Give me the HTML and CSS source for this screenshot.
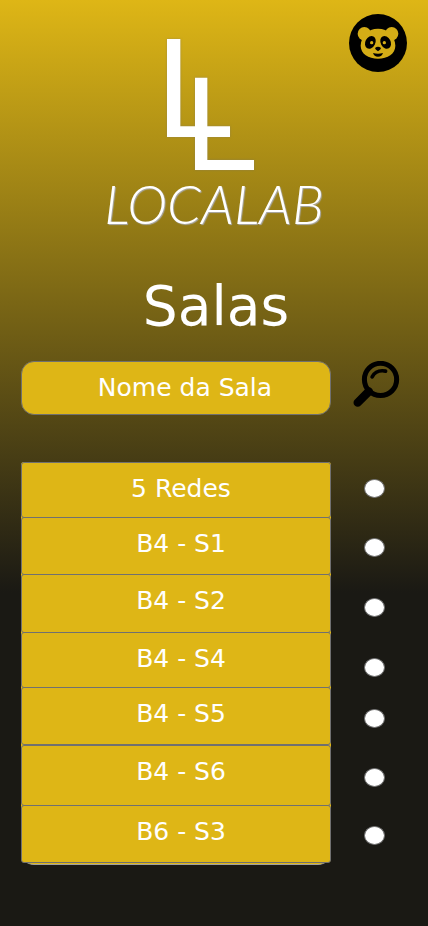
FILE: index.html
```html
<!DOCTYPE html>
<html lang="pt">
<head>
<meta charset="utf-8">
<meta name="viewport" content="width=device-width, initial-scale=1">
<title>Localab - Salas</title>
<link rel="stylesheet" href="styles.css">
</head>
<body>
<header class="top">
  <div class="brand">
    <svg class="brand-mark" viewBox="228 57 261 393" aria-hidden="true">
      <path d="M228 57h40v262h149v32H228z" fill="#fff"/>
      <path d="M312 173h37v247h140v30H312z" fill="#fff"/>
    </svg>
    <span class="brand-name">LOCALAB</span>
  </div>
  <button class="profile" type="button" aria-label="Perfil">
    <svg viewBox="27 27 174 174" aria-hidden="true">
      <circle cx="114" cy="114" r="87" fill="#000"/>
      <g fill="#d4ad16">
        <circle cx="73" cy="86" r="20"/>
        <circle cx="155" cy="86" r="20"/>
        <path d="M114 71c31 0 51 23 52 51 0 24-23 39-52 39s-52-15-52-39c1-28 21-51 52-51z"/>
      </g>
      <g fill="#000">
        <ellipse cx="91" cy="112" rx="15" ry="20" transform="rotate(28 91 112)"/>
        <ellipse cx="137" cy="112" rx="15" ry="20" transform="rotate(-28 137 112)"/>
        <path d="M105 129q9-8 18 0 0 4-9 10-9-6-9-10z"/>
        <path d="M99 144q15 5 30 0-3 11-15 11t-15-11z"/>
      </g>
      <circle cx="95" cy="113" r="5" fill="#d4ad16"/>
      <circle cx="133" cy="113" r="5" fill="#d4ad16"/>
    </svg>
  </button>
</header>
<main>
  <h1>Salas</h1>
  <form class="layout">
    <input class="search-field" type="text" placeholder="Nome da Sala" aria-label="Nome da Sala">
    <button class="search-button" type="button" aria-label="Pesquisar">
      <svg viewBox="100 32 140 140" fill="none" stroke="#000" stroke-linecap="round" aria-hidden="true">
        <circle cx="182" cy="87" r="48" stroke-width="15"/>
        <path d="M157 79q12-22 40-17" stroke-width="11"/>
        <path d="M114 156l33-33" stroke-width="25"/>
      </svg>
    </button>
    <div class="rooms">
      <label class="room" for="r1">5 Redes</label>
      <label class="room" for="r2">B4 - S1</label>
      <label class="room" for="r3">B4 - S2</label>
      <label class="room" for="r4">B4 - S4</label>
      <label class="room" for="r5">B4 - S5</label>
      <label class="room" for="r6">B4 - S6</label>
      <label class="room" for="r7">B6 - S3</label>
    </div>
    <div class="choices">
      <input type="radio" name="room" id="r1">
      <input type="radio" name="room" id="r2">
      <input type="radio" name="room" id="r3">
      <input type="radio" name="room" id="r4">
      <input type="radio" name="room" id="r5">
      <input type="radio" name="room" id="r6">
      <input type="radio" name="room" id="r7">
    </div>
  </form>
</main>
</body>
</html>
```
FILE: styles.css
```css
* {
  box-sizing: border-box;
}

body {
  margin: 0;
  min-height: 100vh;
  background: linear-gradient(#deb616, #1a1914 64%) no-repeat #1a1914;
  color: #fff;
  font-family: "DejaVu Sans", sans-serif;
  font-size: 25px;
}

button {
  padding: 0;
  border: 0;
  background: none;
  cursor: pointer;
}

svg {
  display: block;
}

.top {
  display: grid;
  grid-template-columns: 1fr auto 1fr;
  padding: 14px 21px 0;
}

.brand {
  grid-column: 2;
  display: flex;
  flex-direction: column;
  align-items: center;
  padding-top: 25px;
}

.brand-mark {
  width: 87px;
  height: 131px;
  margin-right: 8px;
  filter: drop-shadow(0 0 1px #77777780);
}

.brand-name {
  font-family: Lato, sans-serif;
  font-size: 54px;
  font-style: italic;
  font-weight: 300;
  line-height: 68px;
  text-shadow: 1px 1px 1px #aaa;
}

.profile {
  grid-column: 3;
  justify-self: end;
  align-self: start;
  width: 58px;
  height: 58px;
}

h1 {
  margin: 35px 0 22px;
  padding-left: 4px;
  font-size: 55px;
  font-weight: 400;
  line-height: 66px;
  text-align: center;
}

.layout {
  display: grid;
  grid-template-columns: 1fr 47px;
  column-gap: 22px;
  row-gap: 47px;
  padding: 0 28px 60px 21px;
}

.search-field {
  width: 100%;
  height: 54px;
  padding: 0 0 2px 18px;
  border: 1px solid #707070;
  border-radius: 13px;
  background: #deb616;
  color: #fff;
  font: inherit;
  text-align: center;
}

.search-field::placeholder {
  color: #fff;
  opacity: 1;
}

.search-button {
  width: 47px;
  height: 47px;
}

.rooms {
  display: grid;
  grid-template-rows: 55px 57px 58px 55px 58px 60px 58px;
  padding-bottom: 1px;
  border-bottom: 1px solid #a0a0a0;
  border-radius: 3px 3px 13px 13px;
  background: #deb616;
}

.room {
  margin-bottom: -1px;
  padding: 11px 0 0 10px;
  border: 1px solid #707070;
  border-radius: 3px;
  background: #deb616;
  line-height: 30px;
  text-align: center;
}

.room:nth-child(5),
.room:last-child {
  margin-bottom: 0;
}

.choices {
  display: grid;
  grid-template-rows: 59px 60px 60px 51px 59px 58px 18px;
  justify-items: center;
  align-content: start;
  padding: 17px 4px 0 0;
}

.choices input {
  width: 21px;
  height: 19px;
  margin: 0;
  appearance: none;
  border: 1px solid #707070;
  border-radius: 50%;
  background: #fff;
}

.choices input:checked {
  background: #deb616;
}
```
